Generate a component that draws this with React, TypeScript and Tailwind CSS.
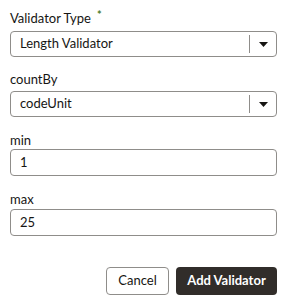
export default function App() {
  const font = { fontFamily: 'Lato, "Noto Sans", sans-serif' };
  return (
    <div className="w-[291px] h-[306px] bg-white text-[#161513]" style={font}>
      <div className="pl-[10px] pr-[14px] pt-[10px]">
        <div className="flex items-start h-[16px] text-[13px] leading-[16px]">
          <span>Validator Type</span>
          <span className="ml-[6px] text-[11px] leading-[11px] font-bold text-[#4d7c2a] -mt-[1px]">*</span>
        </div>
        <div className="mt-[5px] h-[26px] border border-[#8f8d8a] rounded-[4px] flex items-center">
          <span className="flex-1 pl-[9px] text-[13px]">Length Validator</span>
          <span className="w-px h-[18px] bg-[#8f8d8a]" />
          <span className="w-[26px] flex justify-center">
            <svg width="9" height="5" viewBox="0 0 9 5"><path d="M0 0h9L4.5 5z" fill="#161513" /></svg>
          </span>
        </div>
        <div className="mt-[14px] h-[16px] text-[13px] leading-[16px]">countBy</div>
        <div className="mt-[4px] h-[26px] border border-[#8f8d8a] rounded-[4px] flex items-center">
          <span className="flex-1 pl-[9px] text-[13px]">codeUnit</span>
          <span className="w-px h-[18px] bg-[#8f8d8a]" />
          <span className="w-[26px] flex justify-center">
            <svg width="9" height="5" viewBox="0 0 9 5"><path d="M0 0h9L4.5 5z" fill="#161513" /></svg>
          </span>
        </div>
        <div className="mt-[15px] h-[16px] text-[13px] leading-[16px]">min</div>
        <div className="mt-[1px] h-[27px] border border-[#8f8d8a] rounded-[4px] flex items-center pl-[9px] text-[13px]">1</div>
        <div className="mt-[15px] h-[16px] text-[13px] leading-[16px]">max</div>
        <div className="mt-[2px] h-[27px] border border-[#8f8d8a] rounded-[4px] flex items-center pl-[9px] text-[13px]">25</div>
        <div className="mt-[31px] flex justify-end gap-[7px]">
          <button className="h-[28px] w-[63px] border border-[#8f8d8a] rounded-[4px] bg-white text-[13px]">Cancel</button>
          <button className="h-[28px] w-[101px] rounded-[4px] bg-[#312d2a] text-white font-bold text-[13px]">Add Validator</button>
        </div>
      </div>
    </div>
  );
}
